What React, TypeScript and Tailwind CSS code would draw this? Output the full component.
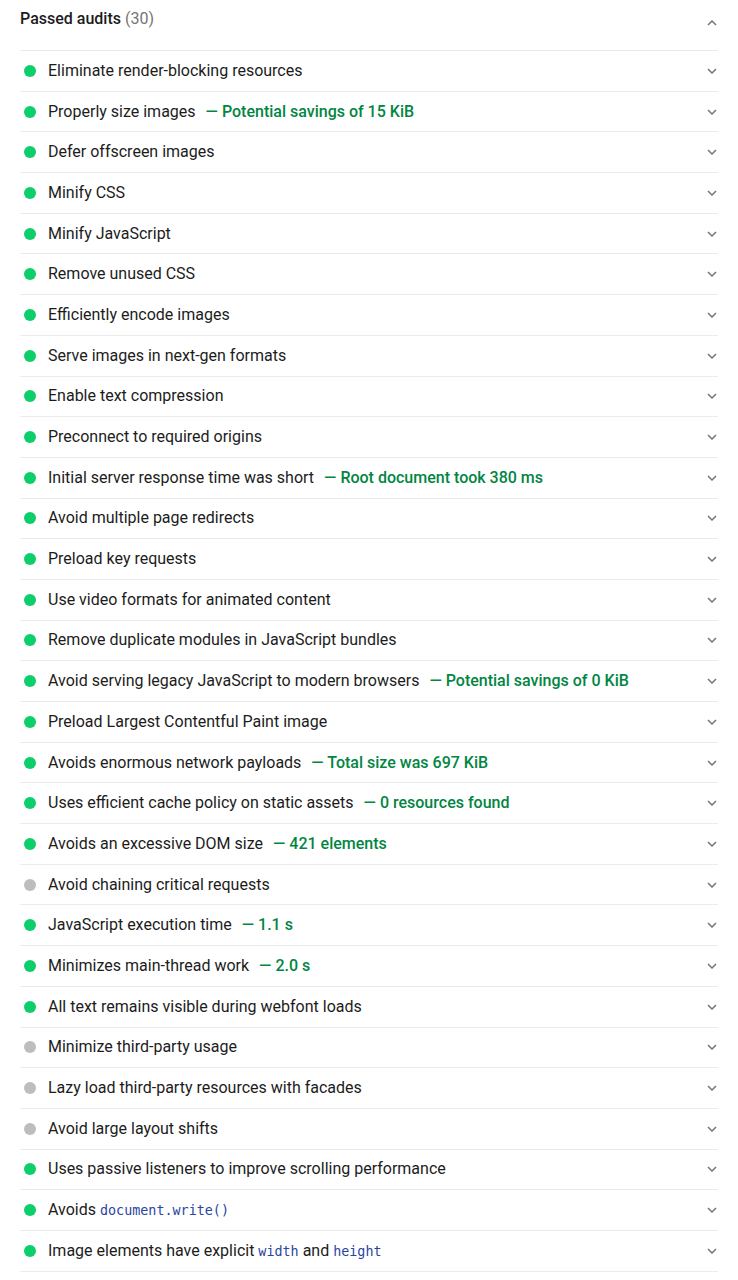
const AUDITS: { title: string; value?: string; code?: [string, string?, string?]; pass?: boolean }[] = [
  { title: "Eliminate render-blocking resources" },
  { title: "Properly size images", value: "Potential savings of 15 KiB" },
  { title: "Defer offscreen images" },
  { title: "Minify CSS" },
  { title: "Minify JavaScript" },
  { title: "Remove unused CSS" },
  { title: "Efficiently encode images" },
  { title: "Serve images in next-gen formats" },
  { title: "Enable text compression" },
  { title: "Preconnect to required origins" },
  { title: "Initial server response time was short", value: "Root document took 380 ms" },
  { title: "Avoid multiple page redirects" },
  { title: "Preload key requests" },
  { title: "Use video formats for animated content" },
  { title: "Remove duplicate modules in JavaScript bundles" },
  { title: "Avoid serving legacy JavaScript to modern browsers", value: "Potential savings of 0 KiB" },
  { title: "Preload Largest Contentful Paint image" },
  { title: "Avoids enormous network payloads", value: "Total size was 697 KiB" },
  { title: "Uses efficient cache policy on static assets", value: "0 resources found" },
  { title: "Avoids an excessive DOM size", value: "421 elements" },
  { title: "Avoid chaining critical requests", pass: false },
  { title: "JavaScript execution time", value: "1.1 s" },
  { title: "Minimizes main-thread work", value: "2.0 s" },
  { title: "All text remains visible during webfont loads" },
  { title: "Minimize third-party usage", pass: false },
  { title: "Lazy load third-party resources with facades", pass: false },
  { title: "Avoid large layout shifts", pass: false },
  { title: "Uses passive listeners to improve scrolling performance" },
  { title: "Avoids", code: ["document.write()"] },
  { title: "Image elements have explicit", code: ["width", "and", "height"] },
];

function Chevron({ up = false }: { up?: boolean }) {
  return (
    <svg width="10" height="6" viewBox="0 0 10 6" className={up ? "rotate-180" : ""}>
      <path d="M1 1l4 4 4-4" fill="none" stroke="#757575" strokeWidth="1.5" />
    </svg>
  );
}

function Code({ children }: { children: string }) {
  return (
    <code className="text-[13.4px] text-[#2a45a0]" style={{ fontFamily: "'DejaVu Sans Mono', monospace" }}>
      {children}
    </code>
  );
}

export default function App() {
  return (
    <div className="bg-white min-h-[1280px] px-5 text-[#1c1c1c]" style={{ fontFamily: "Roboto, sans-serif" }}>
      {/* group header */}
      <div className="flex items-start justify-between h-[50px] pt-[7px]">
        <div className="text-[16px] font-medium">
          Passed audits <span className="text-[#757575] font-normal">(30)</span>
        </div>
        <div className="pt-[13px] pr-[1px]">
          <Chevron up />
        </div>
      </div>

      {AUDITS.map((a) => (
        <div key={a.title} className="flex items-center h-[40.7px] border-t border-[#ebebeb]">
          <span
            className={`w-3 h-3 rounded-full ml-1 mr-3 shrink-0 ${a.pass === false ? "bg-[#bdbdbd]" : "bg-[#0cce6b]"}`}
          />
          <div className="flex-1 text-[16px] whitespace-nowrap">
            {a.title}
            {a.code && (
              <>
                {" "}
                <Code>{a.code[0]}</Code>
                {a.code[1] && <> {a.code[1]} </>}
                {a.code[2] && <Code>{a.code[2]}</Code>}
              </>
            )}
            {a.value && <span className="ml-[10px] text-[#018642] font-medium">— {a.value}</span>}
          </div>
          <div className="pr-[1px]">
            <Chevron />
          </div>
        </div>
      ))}
      <div className="border-t border-[#ebebeb]" />
    </div>
  );
}
